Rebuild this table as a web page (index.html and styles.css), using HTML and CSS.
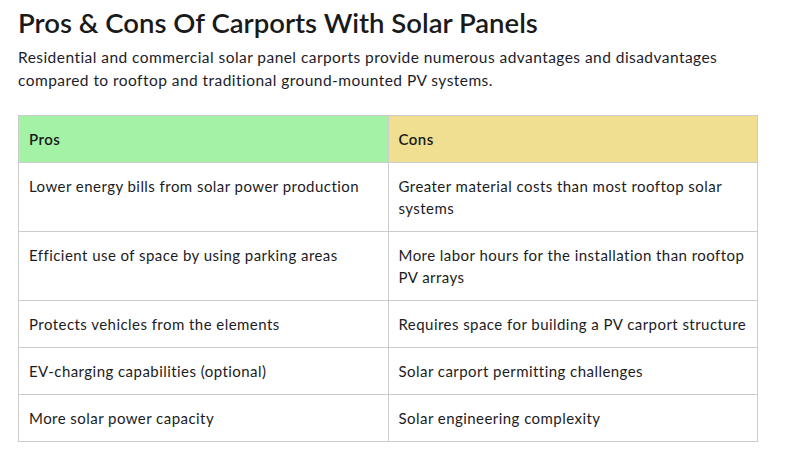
FILE: index.html
```html
<!DOCTYPE html>
<html lang="en">
<head>
<meta charset="utf-8">
<title>Pros & Cons Of Carports With Solar Panels</title>
<link rel="stylesheet" href="styles.css">
</head>
<body>
<main class="article">
  <h2 class="title">Pros &amp; Cons Of Carports With Solar Panels</h2>
  <p class="intro">Residential and commercial solar panel carports provide numerous advantages and disadvantages compared to rooftop and traditional ground-mounted PV systems.</p>
  <table class="pc-table">
    <thead>
      <tr><th class="pros">Pros</th><th class="cons">Cons</th></tr>
    </thead>
    <tbody>
      <tr><td>Lower energy bills from solar power production</td><td>Greater material costs than most rooftop solar systems</td></tr>
      <tr><td>Efficient use of space by using parking areas</td><td>More labor hours for the installation than rooftop PV arrays</td></tr>
      <tr><td>Protects vehicles from the elements</td><td>Requires space for building a PV carport structure</td></tr>
      <tr><td>EV-charging capabilities (optional)</td><td>Solar carport permitting challenges</td></tr>
      <tr><td>More solar power capacity</td><td>Solar engineering complexity</td></tr>
    </tbody>
  </table>
</main>
</body>
</html>
```
FILE: styles.css
```css
html, body {
  margin: 0;
  padding: 0;
  background: #ffffff;
}
body {
  font-family: Lato, "Liberation Sans", sans-serif;
  color: #1c1c24;
}
.article {
  width: 740px;
  margin-left: 18px;
  padding-top: 6px;
}
.title {
  margin: 0;
  font-size: 27.5px;
  line-height: 34px;
  font-weight: 600;
  color: #1a1a1a;
}
.intro {
  margin: 6px 0 0 0;
  font-size: 15.5px;
  line-height: 23px;
  letter-spacing: 0.45px;
  color: #1c1c2a;
}
.pc-table {
  margin-top: 23px;
  width: 740px;
  border-collapse: collapse;
  table-layout: fixed;
  font-size: 15px;
  line-height: 22px;
  letter-spacing: 0.45px;
}
.pc-table th,
.pc-table td {
  border: 1px solid #cccccc;
  padding: 12px 10px 12px 10px;
  text-align: left;
  vertical-align: top;
}
.pc-table th {
  font-weight: 600;
  color: #1a1a1a;
}
.pc-table .pros { background: #a3f2a6; }
.pc-table .cons { background: #f0df90; }
```
